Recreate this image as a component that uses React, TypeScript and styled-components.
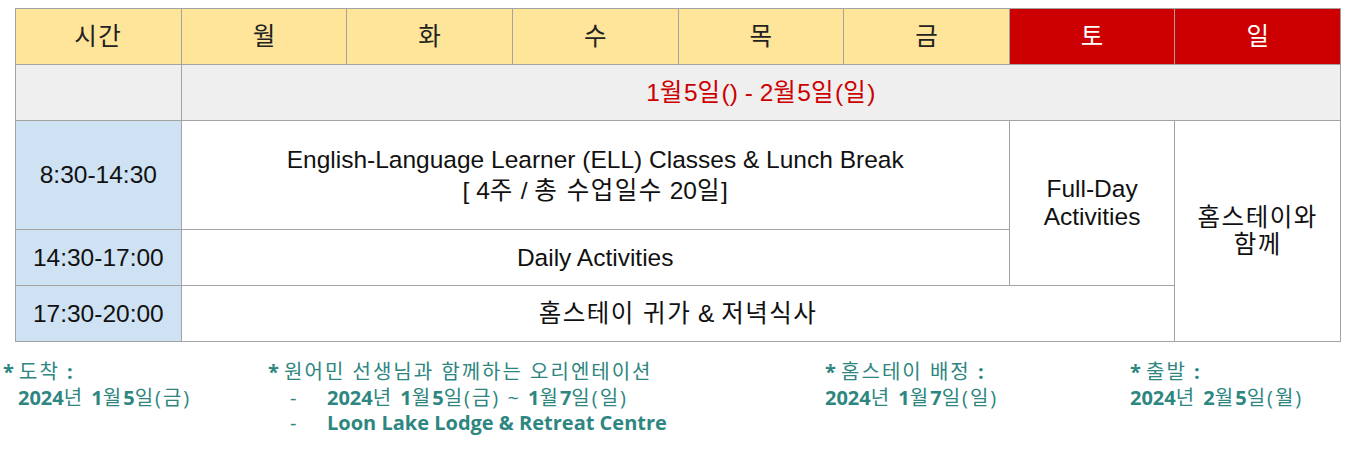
import styled, { createGlobalStyle } from "styled-components";

const GlobalStyle = createGlobalStyle`
  html, body {
    margin: 0;
    padding: 0;
    background: #ffffff;
  }
  body {
    font-family: "Liberation Sans", "Noto Sans CJK KR", Arial, sans-serif;
  }
`;

type Tone = "header" | "weekend" | "band" | "time" | "plain";

const tones: Record<Tone, { bg: string; fg: string }> = {
  header: { bg: "#ffe599", fg: "#222222" },
  weekend: { bg: "#cc0000", fg: "#ffffff" },
  band: { bg: "#efefef", fg: "#cc0000" },
  time: { bg: "#cfe2f3", fg: "#111111" },
  plain: { bg: "#ffffff", fg: "#111111" },
};

const Page = styled.div`
  padding: 8px 0 0 3px;
  width: 1352px;
  height: 449px;
  box-sizing: border-box;
  overflow: hidden;
`;

const Grid = styled.div`
  display: grid;
  grid-template-columns: repeat(8, 1fr);
  grid-template-rows: 55px 55px 108px 55px 55px;
  gap: 1px;
  padding: 1px;
  margin-left: 12px;
  width: 1326px;
  box-sizing: border-box;
  background: #a3a3a3;
`;

const Cell = styled.div<{ $tone: Tone; $col: string; $row: string; $lh?: number }>`
  grid-column: ${({ $col }) => $col};
  grid-row: ${({ $row }) => $row};
  background: ${({ $tone }) => tones[$tone].bg};
  color: ${({ $tone }) => tones[$tone].fg};
  display: flex;
  align-items: center;
  justify-content: center;
  text-align: center;
  font-size: 24.5px;
  line-height: ${({ $lh }) => ($lh ? `${$lh}px` : "28px")};
`;

/* hangul in the sheet is set wider than the Noto glyphs */
const Han = styled.span`
  letter-spacing: 1.5px;
`;

const Notes = styled.div`
  display: flex;
  margin-top: 17px;
  font-family: "Open Sans", "Noto Sans CJK KR", sans-serif;
  font-size: 20px;
  line-height: 25.5px;
  color: #2e8680;
`;

const Note = styled.div<{ $w: number }>`
  width: ${({ $w }) => $w}px;
  flex-shrink: 0;
`;

const Line = styled.div<{ $indent?: number }>`
  padding-left: ${({ $indent }) => $indent ?? 0}px;
  white-space: nowrap;
  display: flex;
`;

const Dash = styled.span`
  width: 59px;
  padding-left: 22px;
  box-sizing: border-box;
  flex-shrink: 0;
`;

const B = styled.b`
  font-weight: 700;
`;

const Ko = styled.span`
  font-weight: 400;
  letter-spacing: 2px;
  white-space: pre;
`;

const days = ["월", "화", "수", "목", "금"];

export default function App() {
  return (
    <>
      <GlobalStyle />
      <Page>
        <Grid>
          <Cell $tone="header" $col="1" $row="1"><Han>시간</Han></Cell>
          {days.map((d, i) => (
            <Cell key={d} $tone="header" $col={`${i + 2}`} $row="1">
              {d}
            </Cell>
          ))}
          <Cell $tone="weekend" $col="7" $row="1">토</Cell>
          <Cell $tone="weekend" $col="8" $row="1">일</Cell>

          <Cell $tone="band" $col="1" $row="2" />
          <Cell $tone="band" $col="2 / 9" $row="2">
            <span>
              1<Han>월</Han>5<Han>일</Han>() - 2<Han>월</Han>5<Han>일</Han>(<Han>일</Han>)
            </span>
          </Cell>

          <Cell $tone="time" $col="1" $row="3">8:30-14:30</Cell>
          <Cell $tone="plain" $col="2 / 7" $row="3" $lh={31}>
            <span>
              English-Language Learner (ELL) Classes &amp; Lunch Break
              <br />[ 4<Han>주</Han> / <Han>총 수업일수</Han> 20<Han>일</Han>]
            </span>
          </Cell>
          <Cell $tone="plain" $col="7" $row="3 / 5">
            <span>
              Full-Day
              <br />
              Activities
            </span>
          </Cell>
          <Cell $tone="plain" $col="8" $row="3 / 6" $lh={27}>
            <Han>
              홈스테이와
              <br />
              함께
            </Han>
          </Cell>

          <Cell $tone="time" $col="1" $row="4">14:30-17:00</Cell>
          <Cell $tone="plain" $col="2 / 7" $row="4">Daily Activities</Cell>

          <Cell $tone="time" $col="1" $row="5">17:30-20:00</Cell>
          <Cell $tone="plain" $col="2 / 8" $row="5">
            <span>
              <Han>홈스테이 귀가</Han> &amp; <Han>저녁식사</Han>
            </span>
          </Cell>
        </Grid>

        <Notes>
          <Note $w={265}>
            <Line>
              <B>*</B>&nbsp;<Ko>도착 </Ko><B>:</B>
            </Line>
            <Line $indent={15}>
              <B>2024</B>
              <Ko>년 </Ko>
              <B>1</B>
              <Ko>월</Ko>
              <B>5</B>
              <Ko>일(금)</Ko>
            </Line>
          </Note>
          <Note $w={557}>
            <Line>
              <B>*</B>&nbsp;<Ko>원어민 선생님과 함께하는 오리엔테이션</Ko>
            </Line>
            <Line>
              <Dash>-</Dash>
              <B>2024</B>
              <Ko>년 </Ko>
              <B>1</B>
              <Ko>월</Ko>
              <B>5</B>
              <Ko>일(금) ~ </Ko>
              <B>1</B>
              <Ko>월</Ko>
              <B>7</B>
              <Ko>일(일)</Ko>
            </Line>
            <Line>
              <Dash>-</Dash>
              <B>Loon Lake Lodge &amp; Retreat Centre</B>
            </Line>
          </Note>
          <Note $w={305}>
            <Line>
              <B>*</B>&nbsp;<Ko>홈스테이 배정 </Ko><B>:</B>
            </Line>
            <Line>
              <B>2024</B>
              <Ko>년 </Ko>
              <B>1</B>
              <Ko>월</Ko>
              <B>7</B>
              <Ko>일(일)</Ko>
            </Line>
          </Note>
          <Note $w={200}>
            <Line>
              <B>*</B>&nbsp;<Ko>출발 </Ko><B>:</B>
            </Line>
            <Line>
              <B>2024</B>
              <Ko>년 </Ko>
              <B>2</B>
              <Ko>월</Ko>
              <B>5</B>
              <Ko>일(월)</Ko>
            </Line>
          </Note>
        </Notes>
      </Page>
    </>
  );
}
